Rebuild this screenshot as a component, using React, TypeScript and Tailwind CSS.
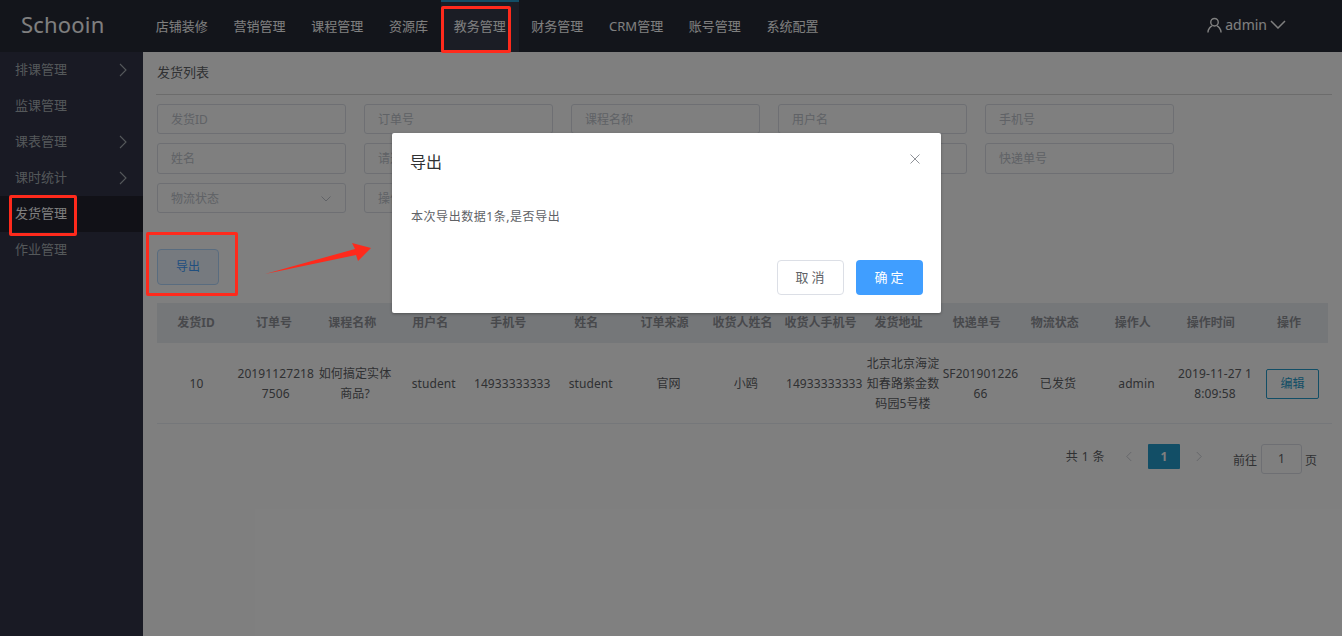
import React from "react";

const nav = ["店铺装修", "营销管理", "课程管理", "资源库", "教务管理", "财务管理", "CRM管理", "账号管理", "系统配置"];
const side: [string, boolean][] = [["排课管理", true], ["监课管理", false], ["课表管理", true], ["课时统计", true], ["发货管理", false], ["作业管理", false]];
const row1 = ["发货ID", "订单号", "课程名称", "用户名", "手机号", "姓名", "请选择", "", "", "快递单号", "物流状态", "操作人", "操作时间"];
const heads = ["发货ID", "订单号", "课程名称", "用户名", "手机号", "姓名", "订单来源", "收货人姓名", "收货人手机号", "发货地址", "快递单号", "物流状态", "操作人", "操作时间", "操作"];
const cells = ["10", "20191127218 7506", "如何搞定实体商品?", "student", "14933333333", "student", "官网", "小鸥", "14933333333", "北京北京海淀知春路紫金数码园5号楼", "SF201901226 66", "已发货", "admin", "2019-11-27 1 8:09:58"];

function Chevron({ className }: { className?: string }) {
  return (
    <svg viewBox="0 0 8 14" className={className} fill="none" stroke="currentColor" strokeWidth="1.1">
      <path d="M1 1l6 6-6 6" />
    </svg>
  );
}

export default function App() {
  return (
    <div className="relative h-[636px] w-[1342px] overflow-hidden bg-white font-['Noto_Sans','Noto_Sans_CJK_SC',sans-serif] text-[12px] text-[#606266]">
      <header className="flex h-[52px] items-stretch bg-[#262a36] text-white">
        <div className="w-[143px] pl-[21px] text-[22px] leading-[49px] tracking-[0.2px]">Schooin</div>
        <nav className="flex">
          {nav.map((n) => (
            <div
              key={n}
              className={
                n === "教务管理"
                  ? "border-t-[2px] border-[#249ccc] bg-[#363b4a] px-[12.85px] text-[13px] leading-[48px]"
                  : "border-t-[2px] border-transparent px-[12.85px] text-[13px] leading-[48px]"
              }
            >
              {n}
            </div>
          ))}
        </nav>
        <div className="ml-auto mr-[56px] flex items-center gap-[3px] pb-[3px] text-[14px]">
          <svg viewBox="0 0 16 16" className="h-[16px] w-[15px]" fill="none" stroke="currentColor" strokeWidth="1.5">
            <circle cx="8" cy="5" r="4" />
            <path d="M1 16c0-4 3-6.500 4.500-7M15 16c0-4-3-6.500-4.500-7" />
          </svg>
          <span>admin</span>
          <svg viewBox="0 0 16 9" className="h-[9px] w-[16px]" fill="none" stroke="currentColor" strokeWidth="1.5">
            <path d="M1 1l7 7 7-7" />
          </svg>
        </div>
      </header>
      <div className="flex h-[584px]">
        <aside className="w-[143px] bg-[#323448] text-[13px] text-[#a9b0b5]">
          {side.map(([s, arrow]) => (
            <div
              key={s}
              className={
                s === "发货管理"
                  ? "flex h-[36px] items-center bg-[#22232f] pl-[15px] text-white"
                  : "flex h-[36px] items-center pl-[15px]"
              }
            >
              <span className="flex-1">{s}</span>
              {arrow && <Chevron className="mb-[1px] mr-[16px] h-[14px] w-[8px]" />}
            </div>
          ))}
        </aside>
        <main className="w-[1199px] pl-[14px] pr-[10px]">
          <div className="-ml-px h-[43px] border-b border-[#d8d8d8] pl-px text-[13px] leading-[41px]">发货列表</div>
          <div className="mt-[9px] grid grid-cols-[repeat(5,189px)] grid-rows-[30px_31px_30px] gap-x-[18px] gap-y-[9px]">
            {row1.map((p, i) => (
              <div key={i} className="flex items-center justify-between rounded-[3px] border border-[#dcdfe6] pl-[13px] pr-[14px] pt-[1px] text-[#c0c4cc]">
                <span>{p}</span>
                {p === "物流状态" && (
                  <svg viewBox="0 0 10 6" className="h-[6px] w-[10px]" fill="none" stroke="currentColor">
                    <path d="M.5.500l4.500 4.500 4.500-4.500" />
                  </svg>
                )}
              </div>
            ))}
          </div>
          <button className="mt-[36px] block h-[36px] w-[62px] rounded-[4px] border border-[#b3d8ff] bg-[#ecf5ff] text-[12px] text-[#409eff]">导出</button>
          <div className="mt-[18px] grid h-[40px] w-[1171px] grid-cols-[repeat(15,78.07px)] items-center bg-[#ebeef3] text-center font-bold text-[#909399]">
            {heads.map((h) => (
              <div key={h} className="whitespace-nowrap">{h}</div>
            ))}
          </div>
          <div className="grid h-[81px] w-[1175px] grid-cols-[79px_79.5px_79px_78.5px_78.5px_78.5px_77px_77.5px_79.5px_78px_77px_78px_79px_78px_78px] items-center border-b border-[#ebeef5] pt-px text-center leading-[20px] tracking-[0.1px]">
            {cells.map((c) => (
              <div key={c} className="break-all">{c}</div>
            ))}
            <div className="flex justify-end pr-[13px]">
              <button className="h-[30px] w-[53px] rounded-[2px] border border-[#249ccc] text-[#249ccc]">编辑</button>
            </div>
          </div>
          <div className="mt-[20px] flex items-start justify-end pr-[15px]">
            <span className="mr-[21px] mt-[4px] tracking-[0.4px]">共 1 条</span>
            <Chevron className="mr-[16px] mt-[7px] h-[11px] w-[6px] rotate-180 text-[#c0c4cc]" />
            <div className="h-[25px] w-[32px] rounded-[1px] bg-[#249ccc] text-center font-bold leading-[25px] text-white">1</div>
            <Chevron className="ml-[16px] mt-[7px] h-[11px] w-[6px] text-[#c0c4cc]" />
            <span className="ml-[31px] mt-[8px]">前往</span>
            <div className="ml-[4px] h-[30px] w-[41px] rounded-[3px] border border-[#dcdfe6] text-center leading-[28px]">1</div>
            <span className="ml-[3px] mt-[8px]">页</span>
          </div>
        </main>
      </div>

      <div className="absolute inset-0 bg-black/50" />

      <div className="absolute left-[392px] top-[133px] h-[180px] w-[549px] rounded-[2px] bg-white shadow-[0_1px_3px_rgba(0,0,0,0.3)]">
        <div className="absolute left-[18px] top-[17px] text-[16px] leading-[24px] text-[#303133]">导出</div>
        <svg viewBox="0 0 10 10" className="absolute left-[518px] top-[21px] h-[10px] w-[10px] text-[#909399]" fill="none" stroke="currentColor">
          <path d="M.5.500l9 9M9.500.500l-9 9" />
        </svg>
        <div className="absolute left-[19px] top-[75px] leading-[18px] tracking-[0.55px]">本次导出数据1条,是否导出</div>
        <div className="absolute right-[18px] top-[127px] flex gap-[12px] text-[13px]">
          <button className="h-[35px] w-[67px] rounded-[4px] border border-[#dcdfe6] bg-white pl-[2px] tracking-[3px]">取消</button>
          <button className="h-[35px] w-[67px] rounded-[4px] bg-[#409eff] pl-[2px] tracking-[3px] text-white">确定</button>
        </div>
      </div>

      <div className="absolute left-[441px] top-[6px] h-[47px] w-[70px] rounded-[2px] border-[3px] border-[#fe2a1c]" />
      <div className="absolute left-[9px] top-[195px] h-[41px] w-[68px] rounded-[2px] border-[3px] border-[#fe2a1c]" />
      <div className="absolute left-[146px] top-[232px] h-[64px] w-[92px] rounded-[2px] border-[3px] border-[#fe2a1c]" />
      <svg className="absolute left-[260px] top-[238px] h-[40px] w-[115px]" viewBox="260 238 115 40">
        <polygon points="265,274 355,249 352,243 371,248 358,261 356,255" fill="#fe2a1c" />
      </svg>
    </div>
  );
}
